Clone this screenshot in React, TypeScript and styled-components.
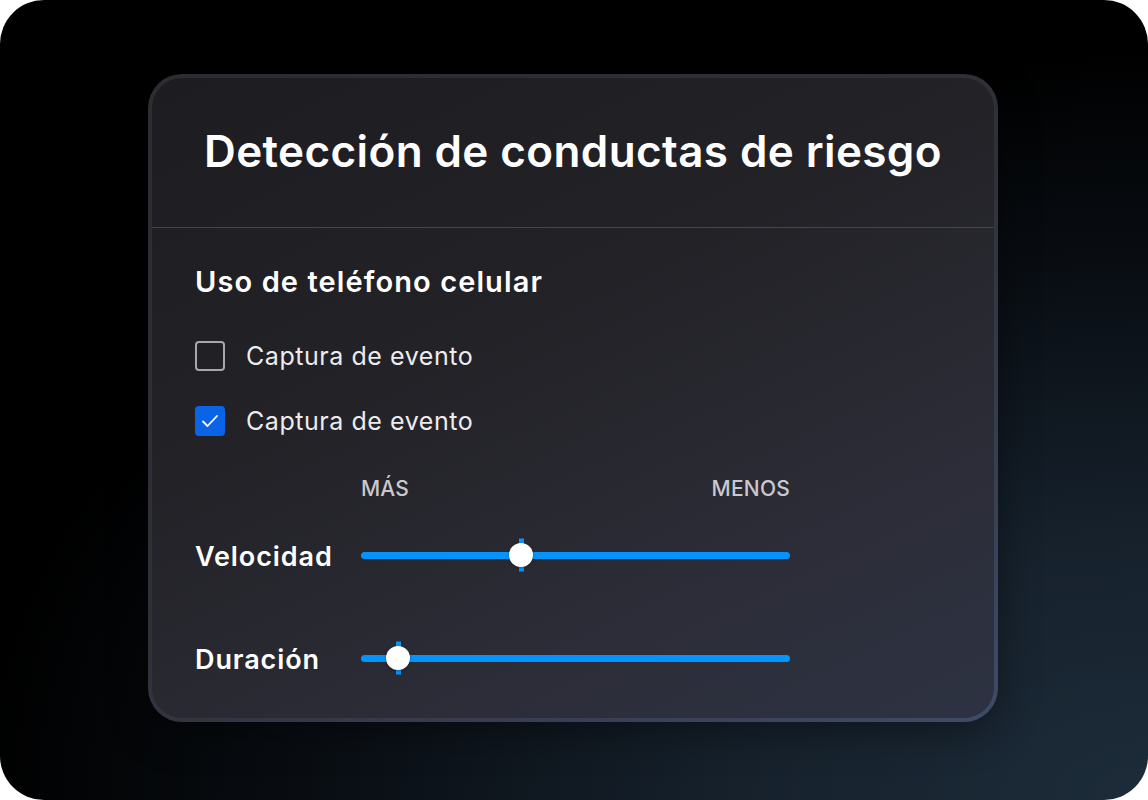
import React from "react";
import styled, { createGlobalStyle } from "styled-components";

const Global = createGlobalStyle`
  html, body { margin: 0; padding: 0; background: #ffffff; }
  body { font-family: Inter, "Noto Sans", sans-serif; }
  * { box-sizing: border-box; }
`;

const Stage = styled.div`
  width: 1148px;
  height: 800px;
  border-radius: 44px;
  overflow: hidden;
  background: radial-gradient(ellipse 120% 110% at 100% 100%, #1d2c3a 0%, #16212c 30%, #0a0f15 58%, #000 85%);
  display: flex;
  align-items: flex-start;
  justify-content: flex-start;
  padding: 74px 0 0 148px;
`;

const Card = styled.div`
  width: 850px;
  height: 648px;
  border-radius: 34px;
  border: 4px solid transparent;
  background:
    linear-gradient(155deg, #1d1c20 0%, #232227 40%, #2c2d38 75%, #2d3242 100%) padding-box,
    linear-gradient(150deg, #2d2c31 0%, #303038 50%, #3f4b68 100%) border-box;
  display: flex;
  flex-direction: column;
  box-shadow: 0 10px 40px rgba(0, 0, 0, 0.4);
`;

const Header = styled.div`
  height: 150px;
  display: flex;
  align-items: center;
  justify-content: center;
  border-bottom: 1px solid #47464c;
`;

const Title = styled.h1`
  margin: 0 0 4px 0;
  font-size: 44px;
  font-weight: 600;
  color: #ffffff;
  letter-spacing: 0.4px;
`;

const Body = styled.div`
  padding: 36px 43px 0 43px;
  display: flex;
  flex-direction: column;
`;

const Section = styled.h2`
  margin: 0;
  font-size: 29px;
  line-height: 36px;
  font-weight: 600;
  color: #ffffff;
  letter-spacing: 1.1px;
`;

const CheckRow = styled.label<{ $mt: number }>`
  display: flex;
  align-items: center;
  gap: 21px;
  margin-top: ${(p) => p.$mt}px;
  height: 30px;
`;

const Box = styled.span<{ $checked: boolean }>`
  width: 30px;
  height: 30px;
  border-radius: 4px;
  display: flex;
  align-items: center;
  justify-content: center;
  border: ${(p) => (p.$checked ? "none" : "2px solid #a7a7ab")};
  background: ${(p) => (p.$checked ? "#0b63e5" : "transparent")};
`;

const CheckText = styled.span`
  font-size: 25px;
  color: #ececee;
  font-weight: 400;
  letter-spacing: 0.55px;
`;

const SliderGrid = styled.div<{ $mt: number; $h: number }>`
  display: grid;
  grid-template-columns: 166px 429px;
  align-items: center;
  margin-top: ${(p) => p.$mt}px;
  height: ${(p) => p.$h}px;
`;

const ScaleLabels = styled.div`
  grid-column: 2;
  display: flex;
  justify-content: space-between;
  font-size: 21px;
  font-weight: 500;
  color: #c9c9cd;
  letter-spacing: 0.2px;
`;

const RowLabel = styled.span`
  font-size: 27px;
  font-weight: 600;
  color: #ffffff;
  letter-spacing: 0.9px;
  padding-top: 3px;
`;

const Track = styled.div`
  position: relative;
  height: 7px;
  border-radius: 4px;
  background: #0594ff;
`;

const Tick = styled.div`
  position: absolute;
  top: 50%;
  width: 5px;
  height: 33px;
  margin-left: -2.5px;
  transform: translateY(-50%);
  background: #0594ff;
`;

const Thumb = styled.div`
  position: absolute;
  top: 50%;
  width: 24px;
  height: 24px;
  margin-left: -12px;
  transform: translateY(-50%);
  border-radius: 50%;
  background: #ffffff;
  box-shadow: 0 1px 3px rgba(0, 0, 0, 0.35);
`;

const Check = () => (
  <svg width="18" height="14" viewBox="0 0 18 14" fill="none">
    <path d="M2 7.5 L6.5 12 L16 2" stroke="#ffffff" strokeWidth="1.8" strokeLinecap="round" strokeLinejoin="round" />
  </svg>
);

const Slider = ({ pos }: { pos: number }) => (
  <Track>
    <Tick style={{ left: `${pos}px` }} />
    <Thumb style={{ left: `${pos}px` }} />
  </Track>
);

export default function App() {
  return (
    <>
      <Global />
      <Stage>
        <Card>
          <Header>
            <Title>Detección de conductas de riesgo</Title>
          </Header>
          <Body>
            <Section>Uso de teléfono celular</Section>
            <CheckRow $mt={41}>
              <Box $checked={false} />
              <CheckText>Captura de evento</CheckText>
            </CheckRow>
            <CheckRow $mt={35}>
              <Box $checked={true}>
                <Check />
              </Box>
              <CheckText>Captura de evento</CheckText>
            </CheckRow>
            <SliderGrid $mt={40} $h={24}>
              <ScaleLabels>
                <span>MÁS</span>
                <span>MENOS</span>
              </ScaleLabels>
            </SliderGrid>
            <SliderGrid $mt={35} $h={40}>
              <RowLabel>Velocidad</RowLabel>
              <Slider pos={160} />
            </SliderGrid>
            <SliderGrid $mt={63} $h={40}>
              <RowLabel>Duración</RowLabel>
              <Slider pos={37} />
            </SliderGrid>
          </Body>
        </Card>
      </Stage>
    </>
  );
}
